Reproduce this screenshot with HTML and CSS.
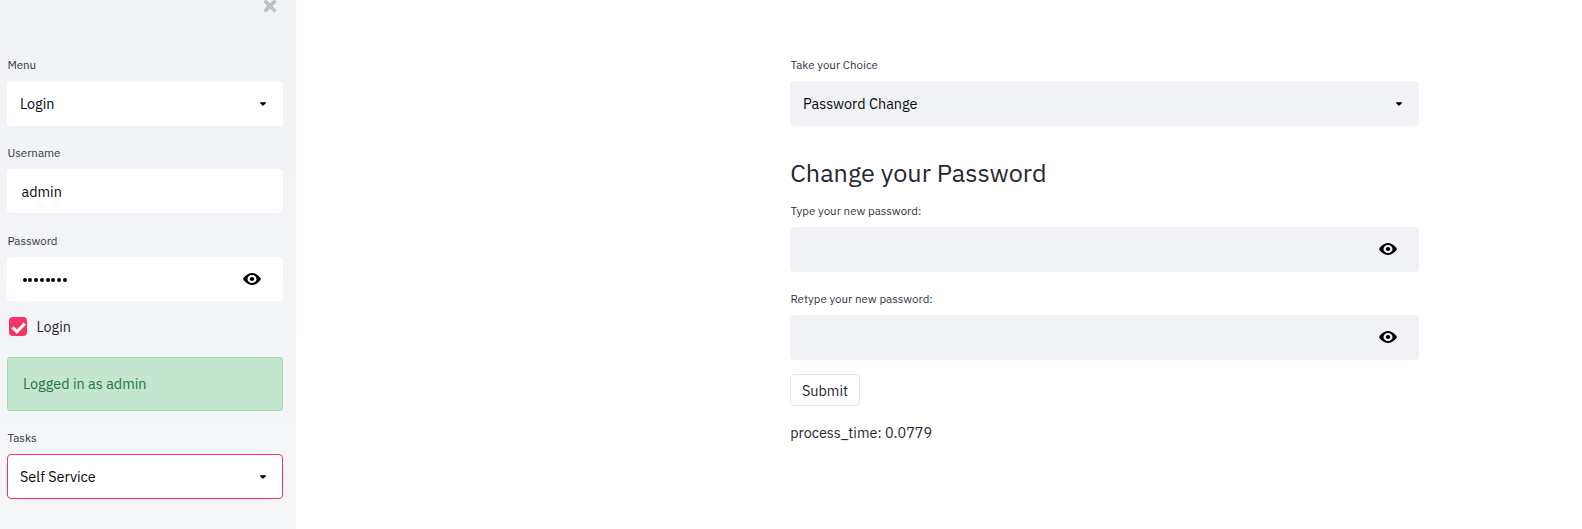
FILE: index.html
```html
<!DOCTYPE html>
<html lang="en">
<head>
<meta charset="utf-8">
<title>Change your Password</title>
<link rel="stylesheet" href="styles.css">
</head>
<body>
<svg class="defs" aria-hidden="true">
  <symbol id="eye" viewBox="0 0 8 8" preserveAspectRatio="none"><path d="M4.03 1c-2.53 0-4.03 3-4.03 3s1.5 3 4.03 3c2.47 0 3.97-3 3.97-3s-1.5-3-3.97-3zm-.03 1c1.11 0 2 .9 2 2 0 1.11-.89 2-2 2-1.1 0-2-.89-2-2 0-1.1.9-2 2-2zm0 1c-.55 0-1 .45-1 1s.45 1 1 1 1-.45 1-1-.45-1-1-1z"/></symbol>
  <symbol id="caret" viewBox="0 0 6 4"><path d="M0 .2h6v.8L3.6 3.4h-1.2L0 1z"/></symbol>
</svg>
<div class="app">
  <aside class="sidebar">
    <div class="close-row"><svg class="close" viewBox="0 0 12 12"><path d="M1.4 1.4l9.2 9.2M10.6 1.4l-9.2 9.2"/></svg></div>
    <div class="label">Menu</div>
    <div class="field select"><span>Login</span><svg class="caret"><use href="#caret"/></svg></div>
    <div class="label second">Username</div>
    <div class="field input"><span>admin</span></div>
    <div class="label third">Password</div>
    <div class="field input"><span class="dots"><i></i><i></i><i></i><i></i><i></i><i></i><i></i><i></i></span><svg class="eye"><use href="#eye"/></svg></div>
    <div class="checkbox"><span class="box"><svg viewBox="0 0 18 19"><path d="M3.4 10.4l4.6 4.2 7.7-8"/></svg></span><span>Login</span></div>
    <div class="alert">Logged in as admin</div>
    <div class="label tasks">Tasks</div>
    <div class="field select focused"><span>Self Service</span><svg class="caret"><use href="#caret"/></svg></div>
  </aside>
  <main class="main">
    <div class="label">Take your Choice</div>
    <div class="field select"><span>Password Change</span><svg class="caret"><use href="#caret"/></svg></div>
    <h2 class="title">Change your Password</h2>
    <div class="label">Type your new password:</div>
    <div class="field input"><span></span><svg class="eye"><use href="#eye"/></svg></div>
    <div class="label second">Retype your new password:</div>
    <div class="field input"><span></span><svg class="eye"><use href="#eye"/></svg></div>
    <button class="submit">Submit</button>
    <p class="time">process_time: 0.0779</p>
  </main>
</div>
</body>
</html>
```
FILE: styles.css
```css
* { box-sizing: border-box; }
body { margin: 0; background: #fff; color: #262730; font-family: "IBM Plex Sans", Roboto, sans-serif; font-size: 14.4px; }
.defs { display: none; }
.app { display: flex; height: 529px; overflow: hidden; }
.sidebar { width: 296px; padding: 0 13px 0 7px; background: linear-gradient(#f0f2f6, #f5f6f8); }
.close-row { display: flex; justify-content: flex-end; height: 57px; padding-right: 6px; }
.close { width: 14px; height: 14px; margin-top: -1px; }
.close path { stroke: #bfc0c4; stroke-width: 3.2; fill: none; }
.main { width: 629px; margin-left: 494px; padding-top: 57px; }
.label { height: 16px; line-height: 16px; margin-bottom: 8px; padding-left: .4px; font-size: 11.52px; color: #31333d; white-space: nowrap; }
.field { display: flex; align-items: center; justify-content: space-between; border-radius: 4px; height: 45px; color: #07080c; white-space: nowrap; }
.sidebar .field { background: #fff; }
.main .field { background: #f0f2f6; }
.select { padding: 0 17px 0 13px; }
.input { padding: 0 22px 0 14.5px; }
.sidebar .input { height: 44px; }
.caret { width: 6px; height: 4px; }
.eye { width: 18px; height: 16px; margin-bottom: 1px; }
.second { margin-top: 19px; }
.third { margin-top: 20px; }
.dots { display: flex; gap: 1.75px; padding: 1px 0 0 1px; }
.dots i { width: 4px; height: 4px; border-radius: 50%; background: #000; }
.checkbox { display: flex; align-items: center; height: 19px; margin: 16px 0 21px 2px; gap: 9.5px; }
.box { width: 18px; height: 19px; background: #f63366; border-radius: 4px; }
.box svg { display: block; width: 18px; height: 19px; }
.box path { fill: none; stroke: #fff; stroke-width: 3; }
.alert { display: flex; align-items: center; height: 54px; border: 1px solid #9fd9b1; border-radius: 3px; background: #c4e6d0; color: #21753b; padding: 0 0 1px 15px; }
.tasks { margin-top: 19px; }
.sidebar .focused { border: 1px solid #f63366; padding: 0 16px 0 12px; }
.title { margin: 29px 0 13px; padding-left: .2px; height: 35px; line-height: 35px; font-size: 25.2px; font-weight: 400; white-space: nowrap; }
.submit { display: flex; align-items: center; justify-content: center; width: 70px; height: 32px; margin: 14px 0 0; padding: 0; border: 1px solid #e4e6ee; border-radius: 4px; background: #fff; color: #262730; font: inherit; }
.time { margin: 16px 0 0; padding-left: .2px; height: 22px; line-height: 22px; white-space: nowrap; }
```
